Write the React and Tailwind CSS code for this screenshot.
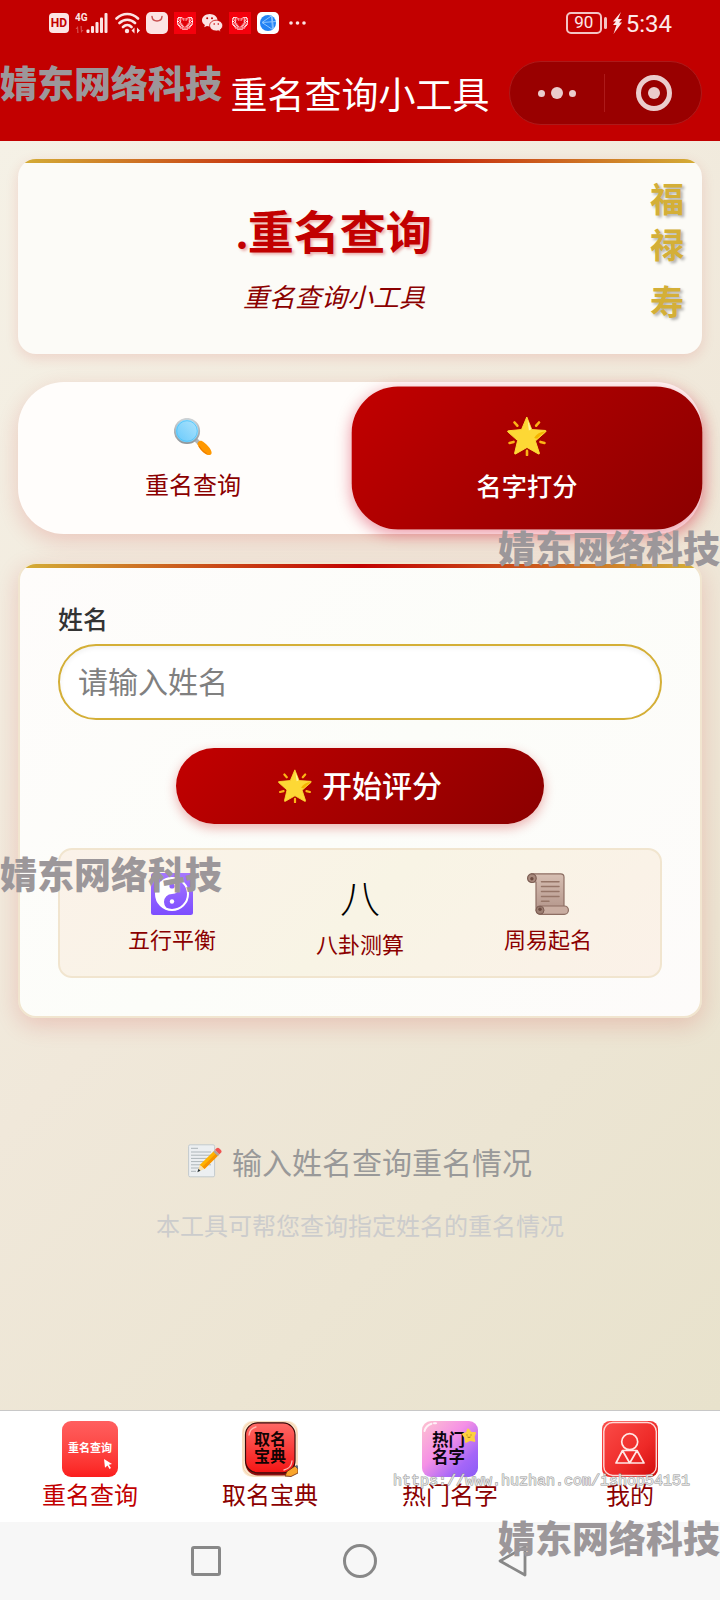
import React from 'react';

const HEART_ROWS = [
  '.####.....####.',
  '##.#.##.##.#.##',
  '#.##..#o#..##.#',
  '##.#ooooooo#.##',
  '#.##ooooooo##.#',
  '##.##ooooo##.##',
  '.##.##ooo##.##.',
  '..##.##o##.##..',
  '...###.#.###...',
  '.....#####.....',
];

function HeartAppIcon() {
  return (
    <svg className="size-[22px]" viewBox="0 0 22 22" aria-hidden="true">
      <rect width="22" height="22" fill="#f5000c" />
      {HEART_ROWS.map((row, y) =>
        row.split('').map((c, x) =>
          c === '.' ? null : (
            <rect key={`${x}-${y}`} x={3 + x * 1.07} y={5 + y * 1.3} width="1" height="1.15" fill={c === '#' ? '#fff' : '#d4000a'} />
          )
        )
      )}
    </svg>
  );
}

function Star({ className }) {
  return (
    <svg className={className} viewBox="0 0 40 40" aria-hidden="true">
      <g stroke="#fcb316" strokeWidth="2.6" strokeLinecap="round">
        <path d="M7.5 6.5l2.8 3.2M32 6.5l-2.8 3.2M2.500 27l4-1M37.500 27l-4-1M20 35v4" />
      </g>
      <path
        d="M19.800 1l5 12.600 13.600.9c.9.1 1 .8.4 1.300L28.400 25l4 12.200c.2.8-.3 1.200-1 .8L20 31.500 8.600 38c-.7.4-1.200 0-1-.8l3-12.600L.800 16c-.6-.6-.4-1.200.5-1.200l13.200-1.200z"
        fill="#fdd835"
        stroke="#fdd835"
        strokeWidth="1"
        strokeLinejoin="round"
      />
      <path d="M20.500 3.500l3.800 9.800-2.400 1.200z" fill="#fff59d" />
      <path d="M38.500 15.200l-8.300 7.300c-1.500.3-2.600-.2-3-.8 2.300-3.700 6-6 11.300-6.500z" fill="#f4b400" />
    </svg>
  );
}

function Magnifier() {
  return (
    <svg className="size-[38px]" viewBox="0 0 38 38" aria-hidden="true">
      <defs>
        <linearGradient id="lens" x1="0" y1="1" x2="1" y2="0">
          <stop offset="0" stopColor="#64c8fb" />
          <stop offset="1" stopColor="#b3e5fc" />
        </linearGradient>
        <linearGradient id="rim" x1="0" y1="0" x2="0" y2="1">
          <stop offset="0" stopColor="#cfd3d5" />
          <stop offset="1" stopColor="#90979b" />
        </linearGradient>
      </defs>
      <path d="M21 21l4.500 4.500" stroke="#b0b6b9" strokeWidth="4" />
      <path d="M23.500 26.500c-.8-1.500 2-4.500 3.800-3.700 5.500 2.700 11.200 9.700 10.200 12.700-.7 2-3.200 2-5.500.7-4-2.400-7-6-8.500-9.700z" fill="#ff9800" />
      <path d="M25 28c2 3.500 5 6.500 8 7.800" stroke="#ef7d00" strokeWidth="1.200" fill="none" />
      <circle cx="13" cy="13" r="12.200" fill="url(#lens)" stroke="url(#rim)" strokeWidth="1.800" />
      <circle cx="13" cy="13" r="10.300" fill="none" stroke="#4fc3f7" strokeWidth=".8" />
    </svg>
  );
}

function YinYang() {
  return (
    <svg className="size-[42px]" viewBox="0 0 42 42" aria-hidden="true">
      <defs>
        <linearGradient id="yy" x1="0" y1="0" x2="0" y2="1">
          <stop offset="0" stopColor="#a777ff" />
          <stop offset="1" stopColor="#7c4dff" />
        </linearGradient>
      </defs>
      <rect width="42" height="42" rx="2.500" fill="url(#yy)" />
      <circle cx="21" cy="21" r="16" fill="none" stroke="#fff" strokeWidth="2" />
      <path d="M21 5a16 16 0 0 0 0 32a8 8 0 0 1 0-16a8 8 0 0 0 0-16z" fill="#fff" />
      <circle cx="21" cy="13" r="2.600" fill="#9163ff" />
      <circle cx="21" cy="28.500" r="2.200" fill="#fff" />
    </svg>
  );
}

function Scroll() {
  return (
    <svg className="size-[42px]" viewBox="0 0 42 42" aria-hidden="true">
      <defs>
        <linearGradient id="paper" x1="0" y1="0" x2="0" y2="1">
          <stop offset="0" stopColor="#d7bfb3" />
          <stop offset="1" stopColor="#b3958a" />
        </linearGradient>
      </defs>
      <path d="M4.500.8h29.200c2 0 3.300 1.300 3.300 3.300V38H12.500c-2 0-3.500-1.500-3.500-3.500V9H4.500z" fill="url(#paper)" stroke="#8d6e63" strokeWidth="1.200" />
      <circle cx="4.900" cy="5.200" r="4.300" fill="#a98a7e" stroke="#7c5d53" strokeWidth="1.200" />
      <circle cx="4.900" cy="5.800" r="1.700" fill="#6d4c41" />
      <rect x="9" y="33" width="32.400" height="8.300" rx="4.100" fill="#c9ada1" stroke="#8d6e63" strokeWidth="1.200" />
      <circle cx="13" cy="37.200" r="4" fill="#9d7f73" stroke="#7c5d53" strokeWidth="1" />
      <circle cx="13" cy="36.300" r="1.700" fill="#6d4c41" />
      <path d="M14.500 8.700h17.500M14.500 13.600h17.500M14.500 18.500h17.500M14.500 23.400h17.500M14.500 28.300h7.500" stroke="#967567" strokeWidth="1.500" strokeLinecap="round" />
    </svg>
  );
}

function Memo() {
  return (
    <svg className="size-[34px]" viewBox="0 0 34 34" aria-hidden="true">
      <rect x=".6" y=".8" width="26" height="32" rx="1.500" fill="#eceff1" stroke="#c3cace" strokeWidth="1" />
      <path d="M3 4.300h7M3 8h20M3 11.200h20M3 14.400h20M3 17.600h20M3 20.800h20M3 24h14M3 27.300h5" stroke="#adb5b9" strokeWidth="1" />
      <path d="M26.500 6.500l4.300 4.300L16.500 25l-4.800-4z" fill="#ffb300" />
      <path d="M28.800 8.700l2 2.100L16.500 25l-2.300-2z" fill="#f79300" />
      <path d="M11.700 21l4.800 4-6.600 2.800z" fill="#ffe0a3" />
      <path d="M10.500 24.700l2 2-3.200 1.500z" fill="#263238" />
      <path d="M25.300 7.700l1.800-1.800 4.400 4.400-1.800 1.800z" fill="#b0a5a0" />
      <path d="M27 5.800l1.500-1.500c1-1 2-.7 2.900.1l1.500 1.500c.9.900.9 2 .1 2.800l-1.600 1.500z" fill="#ef5350" />
    </svg>
  );
}

function StatusBar() {
  return (
    <div className="flex h-[45px] items-center justify-between pl-[49px] pr-12 text-[#fde9e9]">
      <div className="flex items-center gap-[6px]">
        <span className="flex h-5 w-5 items-center justify-center rounded-[4px] bg-[#fce4e4] font-[Roboto] text-[12px] font-bold text-[#c20000]">HD</span>
        <svg className="h-[22px] w-[34px]" viewBox="0 0 34 22" fill="#fce4e4" aria-hidden="true">
          <text x="0" y="9" fontSize="10" fontFamily="Roboto" fontWeight="bold">4G</text>
          <path d="M3 14l-2.500 3h1.700v4h1.300zM6 21l2.500-3H6.800v-4H5.500z" opacity=".35" />
          <rect x="11.500" y="17.500" width="3" height="3.500" rx="1" />
          <rect x="16" y="14" width="3" height="7" rx="1" />
          <rect x="20.500" y="10" width="3" height="11" rx="1" />
          <rect x="25" y="5.500" width="3" height="15.500" rx="1" />
          <rect x="29.500" y="1" width="3" height="20" rx="1" />
        </svg>
        <svg className="h-[22px] w-[25px]" viewBox="0 0 25 22" fill="none" stroke="#fce4e4" strokeWidth="2.600" strokeLinecap="round" aria-hidden="true">
          <path d="M1.500 6.500c6.300-6 15.200-6 21.500 0M4.500 11c4.500-4.300 11-4.300 15.500 0M8 15c2.600-2.500 6-2.500 8.500 0" />
          <circle cx="12" cy="19" r="2.200" fill="#fce4e4" stroke="none" />
          <path d="M19.500 15.500v6L16.500 18.500zM22 15.500v6l3-3z" fill="#fce4e4" stroke="none" />
        </svg>
        <svg className="size-[22px]" viewBox="0 0 22 22" aria-hidden="true">
          <rect width="22" height="22" rx="5" fill="#fce4e4" />
          <path d="M6 4.500c.5 6 9.500 6 10 0" fill="none" stroke="#c85050" strokeWidth="1.500" strokeLinecap="round" />
        </svg>
        <HeartAppIcon />
        <svg className="h-[22px] w-[21px]" viewBox="0 0 21 22" fill="#fce4e4" aria-hidden="true">
          <path d="M7.700 2C3.500 2 0 4.800 0 8.200c0 2 1.100 3.700 2.900 4.800l-.7 2.300 2.700-1.300c.9.300 1.900.4 2.800.4 4.300 0 7.800-2.800 7.800-6.200S12 2 7.700 2z" />
          <path d="M14.200 8.200c-3.700 0-6.600 2.500-6.600 5.400s2.900 5.400 6.600 5.400c.8 0 1.500-.1 2.200-.3l2.300 1.100-.6-1.900c1.600-1 2.600-2.600 2.600-4.300 0-2.900-2.900-5.400-6.500-5.400z" stroke="#c20000" strokeWidth=".8" />
          <g fill="#c20000">
            <circle cx="5.200" cy="6.300" r="1" />
            <circle cx="10" cy="6.300" r="1" />
            <circle cx="12.200" cy="12" r=".8" />
            <circle cx="16.300" cy="12" r=".8" />
          </g>
        </svg>
        <HeartAppIcon />
        <svg className="size-[22px]" viewBox="0 0 22 22" aria-hidden="true">
          <rect width="22" height="22" rx="5" fill="#fff" />
          <circle cx="11" cy="11" r="8" fill="#2483f5" />
          <path d="M14.500 3.800L5 10.500l10.500 7zM5 10.500l14-1M15 4l1.500 13" fill="none" stroke="#8cc4ff" strokeWidth="1" />
        </svg>
        <svg className="ml-[4px] h-1 w-[17px]" viewBox="0 0 17 4" fill="#fce4e4" aria-hidden="true">
          <circle cx="2" cy="2" r="1.800" />
          <circle cx="8.500" cy="2" r="1.800" />
          <circle cx="15" cy="2" r="1.800" />
        </svg>
      </div>
      <div className="flex items-center font-[Roboto]">
        <span className="flex h-[22px] w-9 items-center justify-center rounded-[5px] border-2 border-[#f3c4c4] text-[17px]">90</span>
        <span className="ml-[2px] h-3 w-[3px] rounded-full bg-[#f3c4c4]" />
        <svg className="ml-[5px] h-[22px] w-[11px]" viewBox="0 0 11 22" fill="#fde9e9" aria-hidden="true">
          <path d="M9 0L1 9.500h3L1 13h3.500L1.500 22 10 10.500H7L10 7H6z" />
        </svg>
        <span className="ml-[3px] pt-[2px] text-[24px] leading-6">5:34</span>
      </div>
    </div>
  );
}

function NavBar() {
  return (
    <div className="relative flex h-24 items-center justify-center">
      <h1 className="text-[37px] leading-[48px] text-white">重名查询小工具</h1>
      <div className="absolute right-[18px] top-4 flex h-16 w-[193px] items-center rounded-full border border-[#ad1a1a] bg-[#990000]">
        <button type="button" aria-label="更多" className="flex flex-1 items-center justify-center gap-[6px]">
          <span className="size-[7px] rounded-full bg-[#ebcccc]" />
          <span className="size-3 rounded-full bg-[#ebcccc]" />
          <span className="size-[7px] rounded-full bg-[#ebcccc]" />
        </button>
        <span className="h-[38px] w-px bg-[#ad1a1a]" />
        <button type="button" aria-label="关闭" className="flex flex-1 items-center justify-center pl-[2px]">
          <span className="flex size-9 items-center justify-center rounded-full border-[5px] border-[#ebcccc]">
            <span className="size-3 rounded-full bg-[#ebcccc]" />
          </span>
        </button>
      </div>
    </div>
  );
}

const goldBar = 'h-1 bg-[linear-gradient(90deg,#d4af37,#c20000,#d4af37)]';

function Banner() {
  return (
    <section className="overflow-hidden rounded-[18px] bg-[#fcfbf7] shadow-[0_4px_14px_rgba(194,0,0,0.12)]">
      <div className={goldBar} />
      <div className="flex pr-[18px]">
        <div className="flex-1 pb-10 pt-9 text-center">
          <h2 className="font-['Liberation_Serif','Noto_Sans_CJK_SC',serif] text-[46px] font-bold leading-[69px] text-[#c20000] [text-shadow:2px_2px_3px_rgba(194,0,0,0.3)]">.重名查询</h2>
          <p className="mt-[10px] text-[26px] italic leading-9 text-[#8b0000]">重名查询小工具</p>
        </div>
        <div className="flex flex-col pt-3 text-[34px] font-bold leading-[46px] text-[#d4af37] [text-shadow:2px_2px_3px_rgba(0,0,0,0.3)]">
          <span>福</span>
          <span>禄</span>
          <span className="mt-[11px]">寿</span>
        </div>
      </div>
    </section>
  );
}

function ModeTabs() {
  return (
    <div role="tablist" className="mt-7 flex rounded-[46px] bg-[#fffdfb] p-2 shadow-[0_7px_22px_rgba(194,0,0,0.16)]">
      <button type="button" role="tab" aria-selected="false" className="flex flex-1 flex-col items-center gap-[10px] pb-6 pt-7 text-[24px] leading-9 text-[#8b0000]">
        <Magnifier />
        重名查询
      </button>
      <button
        type="button"
        role="tab"
        aria-selected="true"
        className="flex flex-1 scale-105 flex-col items-center gap-[10px] rounded-[44px] bg-[linear-gradient(135deg,#c20000,#8b0000)] pb-6 pt-7 text-[24px] font-medium leading-9 text-white shadow-[0_4px_14px_rgba(210,0,40,0.4)]"
      >
        <Star className="size-[38px]" />
        名字打分
      </button>
    </div>
  );
}

function Feature({ icon, label }) {
  return (
    <div className="flex flex-1 flex-col items-center gap-2">
      {icon}
      <span className="text-[22px] leading-[30px] text-[#8b0000]">{label}</span>
    </div>
  );
}

function ScoreForm() {
  return (
    <form
      onSubmit={(e) => e.preventDefault()}
      className="mt-7 overflow-hidden rounded-[18px] border-2 border-[#f1e5cf] bg-[linear-gradient(135deg,#fefcfb,#fcfdf9_50%,#fdfbfa)] shadow-[0_7px_24px_rgba(194,0,0,0.16)]"
    >
      <div className={goldBar} />
      <div className="flex flex-col px-[38px] pb-[38px] pt-[34px]">
        <label htmlFor="name" className="text-[25px] font-medium leading-8 text-[#333]">姓名</label>
        <input
          id="name"
          type="text"
          placeholder="请输入姓名"
          className="mt-[10px] h-[76px] w-full rounded-full border-2 border-[#d4af37] bg-white px-[18px] pb-1 text-[30px] placeholder:text-[#808080] shadow-[inset_0_2px_5px_rgba(0,0,0,0.06)] outline-none"
        />
        <button
          type="submit"
          className="mt-7 flex h-[76px] w-[368px] items-center justify-center gap-[10px] self-center rounded-full bg-[linear-gradient(135deg,#c20000,#8b0000)] text-[30px] font-medium text-white shadow-[0_4px_12px_rgba(194,0,0,0.3)]"
        >
          <Star className="size-[34px]" />
          <span className="pb-1">开始评分</span>
        </button>
        <div className="mt-6 flex items-start rounded-[14px] border-2 border-[#f1e5cf] bg-[linear-gradient(135deg,#fbf2e9,#f8f4e5_50%,#fbf1e8)] px-[18px] pb-[18px] pt-[23px]">
          <Feature icon={<YinYang />} label="五行平衡" />
          <Feature
            icon={<span className="text-[40px] font-light leading-[47px] text-black">八</span>}
            label="八卦测算"
          />
          <Feature icon={<Scroll />} label="周易起名" />
        </div>
      </div>
    </form>
  );
}

function QueryIcon() {
  return (
    <span className="flex size-14 flex-col justify-center rounded-[9px] bg-linear-to-b from-[#ff5f5f] to-[#fb1c1c] text-center text-[11px] font-bold leading-4 text-white">
      <span className="pt-[10px]">重名查询</span>
      <svg className="mr-[5px] mt-1 size-[10px] self-end" viewBox="0 0 10 10" fill="#fff" aria-hidden="true">
        <path d="M1 0l8 5-3.200.7L8 9 6.500 10 4.500 6.600 2 8.800z" />
      </svg>
    </span>
  );
}

function BookIcon() {
  return (
    <svg className="size-14" viewBox="0 0 56 56" aria-hidden="true">
      <defs>
        <linearGradient id="book" x1="0" y1="0" x2="0" y2="1">
          <stop offset="0" stopColor="#ff6a66" />
          <stop offset="1" stopColor="#f51414" />
        </linearGradient>
      </defs>
      <rect width="56" height="56" rx="10" fill="#fbe9cf" />
      <rect x="1" y="1" width="54" height="54" rx="11" fill="none" stroke="#f3c9a4" strokeWidth=".8" />
      <rect x="3.500" y="2.500" width="49.500" height="52" rx="12" fill="#8e0f0f" />
      <rect x="3.500" y="1.800" width="49.500" height="50" rx="12" fill="url(#book)" stroke="#3a0a0a" strokeWidth="1.200" />
      <path d="M7 14c.5-4.500 3-7 7-8M50 40c-.5 5-3.500 8-8 9" fill="none" stroke="#ffb8b0" strokeWidth="1.300" strokeLinecap="round" />
      <text x="28" y="24" textAnchor="middle" fontSize="16" fontWeight="bold" fill="#120303">取名</text>
      <text x="28" y="41" textAnchor="middle" fontSize="16" fontWeight="bold" fill="#120303">宝典</text>
      <path d="M43 55l2-4.500 8-5.500 3 3v4l-7 3.500z" fill="#f9a52b" stroke="#6b2a10" strokeWidth=".8" />
      <path d="M53 45l2-1 1 1v3z" fill="#5b6b7a" />
    </svg>
  );
}

function HotIcon() {
  return (
    <svg className="size-14" viewBox="0 0 56 56" aria-hidden="true">
      <defs>
        <linearGradient id="hot" x1="0" y1="0" x2="1" y2="1">
          <stop offset="0" stopColor="#fdc3cf" />
          <stop offset=".42" stopColor="#f590e6" />
          <stop offset=".75" stopColor="#a566f8" />
          <stop offset="1" stopColor="#8a5cf6" />
        </linearGradient>
      </defs>
      <rect width="56" height="56" rx="9" fill="url(#hot)" />
      <path d="M2.500 10c1-4 3-6 7-7.200M12 2.300h2" stroke="#fff" strokeWidth="2" strokeLinecap="round" fill="none" opacity=".8" />
      <text x="26.500" y="25" textAnchor="middle" fontSize="16.500" fontWeight="bold" fill="#0b0410">热门</text>
      <text x="26.500" y="42" textAnchor="middle" fontSize="16.500" fontWeight="bold" fill="#0b0410">名字</text>
      <path d="M46 8.500l2.600 3.200 4.400.2-1.500 4 .8 4-4.300-1-4 2-.5-4.300-2.500-3.400 4-1.300z" fill="#fdd03f" stroke="#fdd03f" strokeWidth="2" strokeLinejoin="round" />
      <path d="M45 13.500v1M49 13.500v1M45.500 16q1.500 1 3 0" stroke="#8a5a10" strokeWidth=".8" fill="none" />
    </svg>
  );
}

function MineIcon() {
  return (
    <svg className="size-14" viewBox="0 0 56 56" aria-hidden="true">
      <defs>
        <linearGradient id="mine" x1="0" y1="0" x2="1" y2="1">
          <stop offset="0" stopColor="#fb4d49" />
          <stop offset=".6" stopColor="#ee2a28" />
          <stop offset="1" stopColor="#cf0b0b" />
        </linearGradient>
      </defs>
      <rect width="56" height="56" rx="8" fill="url(#mine)" />
      <rect x="1.800" y="1.500" width="52.500" height="53" rx="9" fill="none" stroke="#ffd9d6" strokeWidth="1.400" />
      <g fill="none" stroke="#ffe8e6" strokeWidth="1.700" strokeLinejoin="round">
        <circle cx="27.700" cy="20.700" r="8" />
        <path d="M20.500 29.500h14.500L42 42H14zM20.500 29.500L27.700 42 35 29.500" />
      </g>
    </svg>
  );
}

const tabs = [
  { label: '重名查询', icon: <QueryIcon />, active: true },
  { label: '取名宝典', icon: <BookIcon /> },
  { label: '热门名字', icon: <HotIcon /> },
  { label: '我的', icon: <MineIcon /> },
];

function TabBar() {
  return (
    <nav className="flex border-t border-[#c8c8c8] bg-white pb-3 pt-[10px]">
      {tabs.map((tab) => (
        <a key={tab.label} href="#" className={`flex flex-1 flex-col items-center text-[24px] leading-[33px] ${tab.active ? 'text-[#c20000]' : 'text-[#8b0000]'}`}>
          {tab.icon}
          {tab.label}
        </a>
      ))}
    </nav>
  );
}

function SystemBar() {
  return (
    <div className="flex h-[78px] items-center justify-center gap-[120px] bg-[#f7f7f7]">
      <button type="button" aria-label="最近" className="flex size-[34px] items-center justify-center">
        <span className="size-[30px] rounded-[3px] border-3 border-[#888]" />
      </button>
      <button type="button" aria-label="主页" className="size-[34px] rounded-full border-3 border-[#888]" />
      <button type="button" aria-label="返回" className="size-[34px]">
        <svg className="size-[34px]" viewBox="0 0 34 34" fill="none" stroke="#888" strokeWidth="2.800" strokeLinejoin="round" aria-hidden="true">
          <path d="M28 3v28L3 17z" />
        </svg>
      </button>
    </div>
  );
}

function Watermark({ className }) {
  return (
    <span className={`pointer-events-none absolute whitespace-nowrap text-[37px] font-black leading-[44px] text-[#9c979a] ${className}`}>
      婧东网络科技
    </span>
  );
}

export default function App() {
  return (
    <div className="relative flex min-h-screen flex-col overflow-hidden font-['Noto_Sans_CJK_SC',sans-serif]">
      <header className="bg-[#c20000]">
        <StatusBar />
        <NavBar />
      </header>

      <main className="flex-1 bg-[linear-gradient(135deg,#f5f1e6,#f0e8da_50%,#e8e2cc)] px-[18px] pt-[18px]">
        <Banner />
        <ModeTabs />
        <ScoreForm />
        <div className="flex flex-col items-center pt-[121px]">
          <p className="flex items-center gap-[10px] text-[30px] leading-[44px] text-[#999]">
            <Memo />
            输入姓名查询重名情况
          </p>
          <p className="mt-6 text-[24px] leading-9 text-[#ccc]">本工具可帮您查询指定姓名的重名情况</p>
        </div>
      </main>

      <TabBar />
      <SystemBar />

      <Watermark className="left-0 top-[60px]" />
      <Watermark className="right-0 top-[525px]" />
      <Watermark className="left-0 top-[851px]" />
      <Watermark className="bottom-[41px] right-0" />
      <span className="pointer-events-none absolute bottom-[108px] right-[30px] font-['Liberation_Mono',monospace] text-[15px] leading-5 text-[#e4e4e4] [-webkit-text-stroke:1px_#969696] [paint-order:stroke]">
        https://www.huzhan.com/ishop54151
      </span>
    </div>
  );
}
